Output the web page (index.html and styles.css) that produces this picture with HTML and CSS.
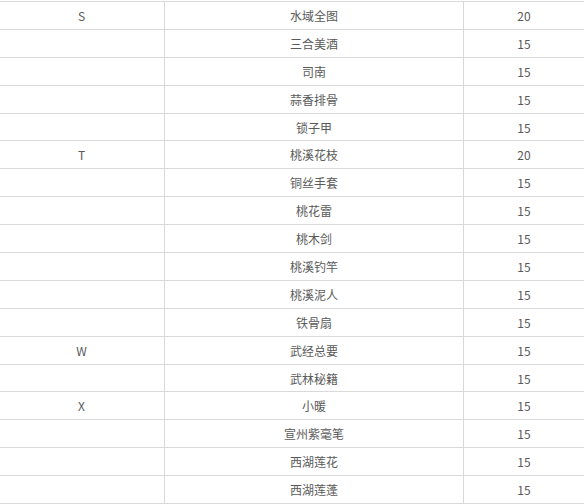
FILE: index.html
```html
<!DOCTYPE html>
<html lang="zh-CN">
<head>
<meta charset="utf-8">
<title>table</title>
<link rel="stylesheet" href="styles.css">
</head>
<body>
<table class="items">
<colgroup><col class="c1"><col class="c2"><col class="c3"></colgroup>
<tbody>
<tr><td>S</td><td>水域全图</td><td>20</td></tr>
<tr><td></td><td>三合美酒</td><td>15</td></tr>
<tr><td></td><td>司南</td><td>15</td></tr>
<tr><td></td><td>蒜香排骨</td><td>15</td></tr>
<tr><td></td><td>锁子甲</td><td>15</td></tr>
<tr><td>T</td><td>桃溪花枝</td><td>20</td></tr>
<tr><td></td><td>铜丝手套</td><td>15</td></tr>
<tr><td></td><td>桃花雷</td><td>15</td></tr>
<tr><td></td><td>桃木剑</td><td>15</td></tr>
<tr><td></td><td>桃溪钓竿</td><td>15</td></tr>
<tr><td></td><td>桃溪泥人</td><td>15</td></tr>
<tr><td></td><td>铁骨扇</td><td>15</td></tr>
<tr><td>W</td><td>武经总要</td><td>15</td></tr>
<tr><td></td><td>武林秘籍</td><td>15</td></tr>
<tr><td>X</td><td>小暖</td><td>15</td></tr>
<tr><td></td><td>宣州紫毫笔</td><td>15</td></tr>
<tr><td></td><td>西湖莲花</td><td>15</td></tr>
<tr><td></td><td>西湖莲蓬</td><td>15</td></tr>
</tbody>
</table>
</body>
</html>
```
FILE: styles.css
```css
html, body {
  margin: 0;
  padding: 0;
  background: #ffffff;
  overflow: hidden;
}
.items {
  border-collapse: collapse;
  table-layout: fixed;
  width: 586px;
  margin-left: -2px;
  margin-top: 1px;
  font-family: "Noto Sans CJK SC", "Noto Sans", sans-serif;
  font-size: 12px;
  color: #5a5a5a;
}
.c1 { width: 166px; }
.c2 { width: 299px; }
.c3 { width: 121px; }
.items td {
  border: 1px solid #d9d9d9;
  height: 25.9px;
  padding: 1px 0 0;
  text-align: center;
  vertical-align: middle;
  line-height: 16px;
}
```
